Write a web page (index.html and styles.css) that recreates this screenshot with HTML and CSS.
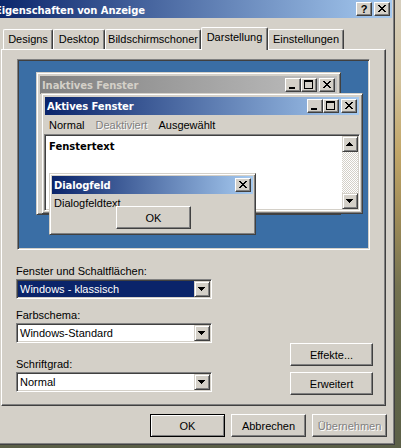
FILE: index.html
```html
<!DOCTYPE html>
<html lang="de">
<head>
    <meta charset="UTF-8">
    <title>Eigenschaften von Anzeige</title>
    <link rel="stylesheet" href="styles.css">
</head>
<body>

<div class="dialog">
    <div class="caption">
        <span class="caption-title">Eigenschaften von Anzeige</span>
        <div class="cap-buttons">
            <span class="cap-btn help">?</span>
            <span class="cap-btn spaced">
                <svg width="14" height="12" viewBox="0 0 14 12" shape-rendering="crispEdges"><path d="M3 2h2v1H3zM9 2h2v1H9zM4 3h2v1H4zM8 3h2v1H8zM5 4h4v1H5zM6 5h2v1H6zM5 6h4v1H5zM4 7h2v1H4zM8 7h2v1H8zM3 8h2v1H3zM9 8h2v1H9z"/></svg>
            </span>
        </div>
    </div>

    <div class="tabs">
        <div class="tab w-designs">Designs</div>
        <div class="tab w-desktop">Desktop</div>
        <div class="tab w-saver">Bildschirmschoner</div>
        <div class="tab active w-look">Darstellung</div>
        <div class="tab w-settings">Einstellungen</div>
    </div>

    <div class="panel">
        <div class="preview">
            <!-- inaktives Fenster -->
            <div class="mini-win inactive-win">
                <div class="mini-caption inactive">
                    <span class="mini-title">Inaktives Fenster</span>
                    <div class="cap-buttons">
                        <span class="cap-btn"><svg width="14" height="12" viewBox="0 0 14 12" shape-rendering="crispEdges"><path d="M3 8h6v2H3z"/></svg></span>
                        <span class="cap-btn"><svg width="14" height="12" viewBox="0 0 14 12" shape-rendering="crispEdges"><path fill-rule="evenodd" d="M2 1h9v9H2zM3 3h7v6H3z"/></svg></span>
                        <span class="cap-btn spaced"><svg width="14" height="12" viewBox="0 0 14 12" shape-rendering="crispEdges"><path d="M3 2h2v1H3zM9 2h2v1H9zM4 3h2v1H4zM8 3h2v1H8zM5 4h4v1H5zM6 5h2v1H6zM5 6h4v1H5zM4 7h2v1H4zM8 7h2v1H8zM3 8h2v1H3zM9 8h2v1H9z"/></svg></span>
                    </div>
                </div>
            </div>

            <!-- aktives Fenster -->
            <div class="mini-win active-win">
                <div class="mini-caption">
                    <span class="mini-title">Aktives Fenster</span>
                    <div class="cap-buttons">
                        <span class="cap-btn"><svg width="14" height="12" viewBox="0 0 14 12" shape-rendering="crispEdges"><path d="M3 8h6v2H3z"/></svg></span>
                        <span class="cap-btn"><svg width="14" height="12" viewBox="0 0 14 12" shape-rendering="crispEdges"><path fill-rule="evenodd" d="M2 1h9v9H2zM3 3h7v6H3z"/></svg></span>
                        <span class="cap-btn spaced"><svg width="14" height="12" viewBox="0 0 14 12" shape-rendering="crispEdges"><path d="M3 2h2v1H3zM9 2h2v1H9zM4 3h2v1H4zM8 3h2v1H8zM5 4h4v1H5zM6 5h2v1H6zM5 6h4v1H5zM4 7h2v1H4zM8 7h2v1H8zM3 8h2v1H3zM9 8h2v1H9z"/></svg></span>
                    </div>
                </div>
                <div class="menu">
                    <span>Normal</span>
                    <span class="disabled">Deaktiviert</span>
                    <span>Ausgewählt</span>
                </div>
                <div class="textbox">
                    <div class="text-area">Fenstertext</div>
                    <div class="scrollbar">
                        <span class="small-btn"><svg width="14" height="14" viewBox="0 0 14 14" shape-rendering="crispEdges"><path d="M6 5h1v1H6zM5 6h3v1H5zM4 7h5v1H4zM3 8h7v1H3z"/></svg></span>
                        <span class="small-btn"><svg width="14" height="14" viewBox="0 0 14 14" shape-rendering="crispEdges"><path d="M3 5h7v1H3zM4 6h5v1H4zM5 7h3v1H5zM6 8h1v1H6z"/></svg></span>
                    </div>
                </div>
            </div>

            <!-- Dialogfeld -->
            <div class="mini-win msg-win">
                <div class="mini-caption flush">
                    <span class="mini-title">Dialogfeld</span>
                    <div class="cap-buttons">
                        <span class="cap-btn"><svg width="14" height="12" viewBox="0 0 14 12" shape-rendering="crispEdges"><path d="M3 2h2v1H3zM9 2h2v1H9zM4 3h2v1H4zM8 3h2v1H8zM5 4h4v1H5zM6 5h2v1H6zM5 6h4v1H5zM4 7h2v1H4zM8 7h2v1H8zM3 8h2v1H3zM9 8h2v1H9z"/></svg></span>
                    </div>
                </div>
                <div class="msg-text">Dialogfeldtext</div>
                <button class="btn msg-ok">OK</button>
            </div>
        </div>

        <div class="options">
            <div class="fields">
                <span class="field-label">Fenster und Schaltflächen:</span>
                <div class="combo focused">
                    <span class="combo-value">Windows - klassisch</span>
                    <span class="small-btn"><svg width="14" height="14" viewBox="0 0 14 14" shape-rendering="crispEdges"><path d="M3 5h7v1H3zM4 6h5v1H4zM5 7h3v1H5zM6 8h1v1H6z"/></svg></span>
                </div>
                <span class="field-label second">Farbschema:</span>
                <div class="combo">
                    <span class="combo-value">Windows-Standard</span>
                    <span class="small-btn"><svg width="14" height="14" viewBox="0 0 14 14" shape-rendering="crispEdges"><path d="M3 5h7v1H3zM4 6h5v1H4zM5 7h3v1H5zM6 8h1v1H6z"/></svg></span>
                </div>
                <span class="field-label third">Schriftgrad:</span>
                <div class="combo">
                    <span class="combo-value">Normal</span>
                    <span class="small-btn"><svg width="14" height="14" viewBox="0 0 14 14" shape-rendering="crispEdges"><path d="M3 5h7v1H3zM4 6h5v1H4zM5 7h3v1H5zM6 8h1v1H6z"/></svg></span>
                </div>
            </div>
            <div class="side-buttons">
                <button class="btn wide">Effekte...</button>
                <button class="btn wide">Erweitert</button>
            </div>
        </div>
    </div>

    <div class="footer">
        <button class="btn default">OK</button>
        <button class="btn">Abbrechen</button>
        <button class="btn disabled">Übernehmen</button>
    </div>
</div>

</body>
</html>
```

FILE: styles.css
```css
body {
    margin: 0;
    width: 401px;
    height: 448px;
    overflow: hidden;
    font-family: "Liberation Sans", Arial, sans-serif;
    font-size: 11px;
    color: #000;
    background: linear-gradient(180deg, #d6cfbf 0%, #d2c29c 18%, #c2a668 34%, #a08c58 48%, #747250 64%, #626649 82%, #5c6048 100%);
}

/* Hauptfenster */
.dialog {
    box-sizing: border-box;
    width: 405px;
    height: 448px;
    margin: -3px 0 0 -10px;
    padding: 2px;
    background: #d4d0c8;
    border: 1px solid;
    border-color: #d4d0c8 #404040 #404040 #d4d0c8;
    box-shadow: inset 1px 1px #fff, inset -1px -1px #808080;
}
.caption {
    display: flex;
    justify-content: space-between;
    align-items: flex-start;
    height: 18px;
    padding-right: 2px;
    background: linear-gradient(90deg, #0a246a, #a6caf0);
}
.caption-title, .mini-title {
    font-family: "DejaVu Sans", Verdana, sans-serif;
    font-weight: bold;
    font-size: 10px;
    letter-spacing: -0.1px;
    color: #fff;
    white-space: nowrap;
}
.caption-title {
    padding: 3px 0 0 2px;
    line-height: 15px;
}
.cap-buttons {
    display: flex;
    padding-top: 2px;
}
.cap-btn {
    box-sizing: border-box;
    display: flex;
    align-items: center;
    justify-content: center;
    width: 16px;
    height: 14px;
    background: #d4d0c8;
    border: 1px solid;
    border-color: #fff #404040 #404040 #fff;
    box-shadow: inset -1px -1px #808080;
}
.cap-btn.spaced {
    margin-left: 2px;
}
.cap-btn.help {
    font-weight: bold;
    font-size: 11px;
    line-height: 12px;
}

/* Registerkarten */
.tabs {
    display: flex;
    align-items: flex-end;
    height: 22px;
    margin: 9px 0 0 10px;
}
.tab {
    box-sizing: border-box;
    height: 20px;
    padding-top: 3px;
    line-height: 13px;
    text-align: center;
    white-space: nowrap;
    border: 1px solid;
    border-bottom: none;
    border-color: #fff #404040 #fff #fff;
    border-radius: 2px 2px 0 0;
    box-shadow: inset -1px 0 #808080;
    background: #d4d0c8;
}
.tab.active {
    position: relative;
    z-index: 1;
    height: 23px;
    margin-bottom: -1px;
    padding-top: 3px;
}
.w-designs { width: 50px; }
.w-desktop { width: 52px; }
.w-saver { width: 96px; }
.w-look { width: 67px; }
.w-settings { width: 76px; }

.panel {
    box-sizing: border-box;
    width: 385px;
    height: 357px;
    margin-left: 8px;
    border: 1px solid;
    border-color: #fff #404040 #404040 #fff;
    box-shadow: inset -1px -1px #808080;
}

/* Vorschau */
.preview {
    position: relative;
    box-sizing: border-box;
    width: 353px;
    height: 191px;
    margin: 9px 0 0 15px;
    background: #3a6ea5;
    border: 1px solid;
    border-color: #808080 #fff #fff #808080;
    box-shadow: inset 1px 1px #404040, inset -1px -1px #d4d0c8;
}
.mini-win {
    position: absolute;
    box-sizing: border-box;
    padding: 2px;
    background: #d4d0c8;
    border: 1px solid;
    border-color: #d4d0c8 #404040 #404040 #d4d0c8;
    box-shadow: inset 1px 1px #fff, inset -1px -1px #808080;
}
.inactive-win {
    left: 18px;
    top: 12px;
    width: 305px;
    height: 143px;
}
.active-win {
    left: 23px;
    top: 33px;
    width: 322px;
    height: 121px;
}
.msg-win {
    left: 31px;
    top: 113px;
    width: 207px;
    height: 62px;
}
.mini-caption {
    display: flex;
    justify-content: space-between;
    align-items: flex-start;
    height: 18px;
    margin: 1px 1px 0;
    padding-right: 2px;
    background: linear-gradient(90deg, #0a246a, #a6caf0);
}
.mini-caption.inactive {
    background: linear-gradient(90deg, #808080, #c0c0c0);
}
.mini-caption.inactive .mini-title {
    color: #d4d0c8;
}
.mini-caption.flush {
    margin: 0;
}
.mini-title {
    padding: 3px 0 0 2px;
    line-height: 13px;
}

.menu {
    display: flex;
    gap: 11px;
    height: 19px;
    padding: 1px 0 0 5px;
    box-sizing: border-box;
    line-height: 18px;
}
.menu .disabled {
    color: #808080;
    text-shadow: 1px 1px #fff;
}
.textbox {
    display: flex;
    box-sizing: border-box;
    height: 77px;
    padding: 1px;
    background: #fff;
    border: 1px solid;
    border-color: #808080 #fff #fff #808080;
    box-shadow: inset 1px 1px #404040, inset -1px -1px #d4d0c8;
}
.text-area {
    flex: 1;
    padding: 4px 0 0 3px;
    line-height: 13px;
    font-family: "DejaVu Sans", Verdana, sans-serif;
    font-weight: bold;
    font-size: 10px;
}
.scrollbar {
    display: flex;
    flex-direction: column;
    justify-content: space-between;
    width: 16px;
    background: repeating-conic-gradient(#fff 0 25%, #d4d0c8 0 50%) 0 0 / 2px 2px;
}
.small-btn {
    box-sizing: border-box;
    display: flex;
    width: 16px;
    height: 16px;
    background: #d4d0c8;
    border: 1px solid;
    border-color: #d4d0c8 #404040 #404040 #d4d0c8;
    box-shadow: inset 1px 1px #fff, inset -1px -1px #808080;
}

.msg-text {
    padding: 3px 0 0 2px;
    line-height: 13px;
}
.msg-ok {
    position: absolute;
    left: 66px;
    top: 32px;
    width: 72px;
}

/* Auswahlfelder */
.options {
    display: flex;
    justify-content: space-between;
    margin: 15px 12px 0 14px;
}
.fields {
    width: 196px;
}
.field-label {
    display: block;
    line-height: 13px;
    margin-bottom: 1px;
}
.field-label.second {
    margin-top: 10px;
}
.field-label.third {
    margin-top: 15px;
}
.combo {
    display: flex;
    box-sizing: border-box;
    height: 20px;
    padding: 1px;
    background: #fff;
    border: 1px solid;
    border-color: #808080 #fff #fff #808080;
    box-shadow: inset 1px 1px #404040, inset -1px -1px #d4d0c8;
}
.combo-value {
    flex: 1;
    padding-left: 2px;
    line-height: 16px;
    white-space: nowrap;
}
.combo.focused .combo-value {
    background: #0a246a;
    color: #fff;
}
.side-buttons {
    display: flex;
    flex-direction: column;
    gap: 6px;
    padding-top: 78px;
}

/* Schaltflächen */
.btn {
    box-sizing: border-box;
    width: 75px;
    height: 23px;
    padding: 0;
    font-family: inherit;
    font-size: 11px;
    color: #000;
    background: #d4d0c8;
    border: 1px solid;
    border-color: #fff #404040 #404040 #fff;
    box-shadow: inset -1px -1px #808080;
}
.btn.wide {
    width: 83px;
}
.btn.default {
    border-color: #000;
    box-shadow: inset 1px 1px #fff, inset -1px -1px #808080;
}
.btn.disabled {
    color: #808080;
    text-shadow: 1px 1px #fff;
}
.footer {
    display: flex;
    justify-content: flex-end;
    gap: 6px;
    margin-top: 8px;
    padding-right: 5px;
}
```
